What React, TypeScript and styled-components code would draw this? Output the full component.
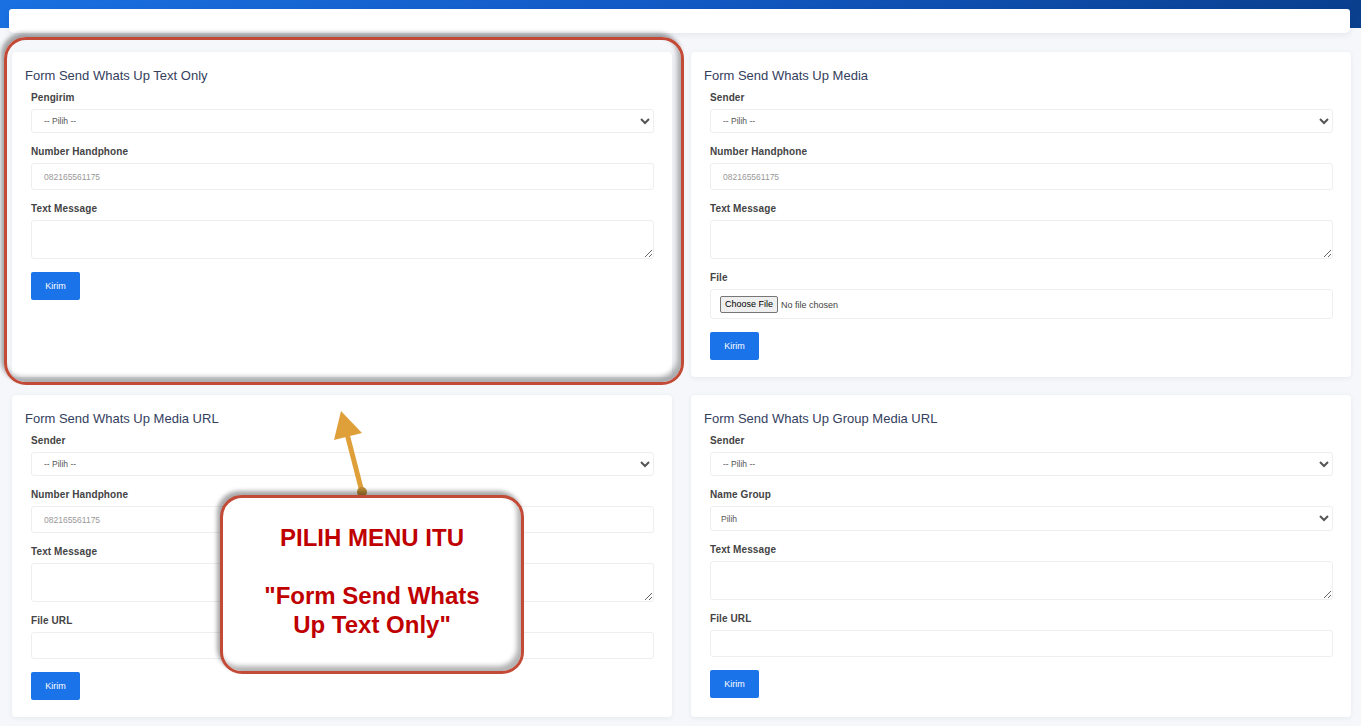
import React from "react";
import styled, { createGlobalStyle } from "styled-components";

const Global = createGlobalStyle`
  html, body { margin: 0; padding: 0; }
  body {
    background: #f5f7fa;
    font-family: "Liberation Sans", Arial, sans-serif;
  }
  * { box-sizing: border-box; }
`;

const Page = styled.div`
  position: relative;
  min-height: 726px;
  background:
    linear-gradient(90deg, #1a70e0 0%, #1259c4 50%, #0a3f8e 100%) top left / 100% 28px no-repeat,
    #f5f7fa;
  padding: 9px 11px 9px 9px;
`;

const TopCard = styled.div`
  height: 24px;
  background: #fff;
  border-radius: 3px 3px 5px 5px;
  box-shadow: 0 2px 6px rgba(30, 40, 80, 0.08);
`;

const Grid = styled.div`
  display: grid;
  grid-template-columns: 1fr 1fr;
  column-gap: 19px;
  row-gap: 18px;
  margin: 19px -1px 0 3px;
`;

const Card = styled.section`
  background: #fff;
  border-radius: 4px;
  box-shadow: 0 1px 5px rgba(30, 40, 80, 0.07);
  padding: 16px 18px 17px 13px;
`;

const Title = styled.h3`
  margin: 0 0 8px;
  font-size: 13px;
  line-height: 16px;
  font-weight: 400;
  color: #34405e;
`;

const Form = styled.div`
  padding-left: 6px;
  display: flex;
  flex-direction: column;
  align-items: flex-start;
`;

const Group = styled.div`
  width: 100%;
  margin-bottom: 13px;
`;

const Label = styled.div`
  font-size: 10px;
  line-height: 12px;
  font-weight: 700;
  color: #444;
  margin-bottom: 5px;
  letter-spacing: 0.1px;
`;

const Select = styled.select<{ $h?: number }>`
  display: block;
  width: 100%;
  height: ${(p) => p.$h ?? 24}px;
  border: 1px solid #eceef1;
  border-radius: 3px;
  background: #fff;
  padding: 0 8px 0 ${(p) => (p.$h ? 6 : 8)}px;
  font-family: "Liberation Sans", Arial, sans-serif;
  font-size: 8.5px;
  color: #555;
  outline: none;
`;

const Input = styled.input`
  display: block;
  width: 100%;
  height: 27px;
  border: 1px solid #eceef1;
  border-radius: 3px;
  background: #fff;
  padding: 0 12px;
  font-family: "Liberation Sans", Arial, sans-serif;
  font-size: 8.5px;
  color: #555;
  outline: none;
  &::placeholder { color: #999; }
`;

const TextArea = styled.textarea`
  display: block;
  width: 100%;
  height: 39px;
  border: 1px solid #eceef1;
  border-radius: 3px;
  background: #fff;
  font-family: "Liberation Sans", Arial, sans-serif;
  font-size: 9px;
  outline: none;
  resize: vertical;
`;

const FileBox = styled.div`
  width: 100%;
  height: 30px;
  border: 1px solid #eceef1;
  border-radius: 3px;
  display: flex;
  align-items: center;
  padding-left: 9px;
`;

const FileInput = styled.input`
  font-family: "Liberation Sans", Arial, sans-serif;
  font-size: 9px;
  color: #444;
  &::file-selector-button {
    font-family: "Liberation Sans", Arial, sans-serif;
    font-size: 9px;
    height: 17px;
    padding: 0 4px;
    margin-right: 3px;
    border: 1px solid #767676;
    border-radius: 2px;
    background: #efefef;
    color: #000;
  }
`;

const Button = styled.button`
  width: 49px;
  height: 28px;
  border: none;
  border-radius: 2px;
  background: #1a73e8;
  color: #fff;
  font-family: "Liberation Sans", Arial, sans-serif;
  font-size: 9px;
  cursor: pointer;
`;

const Frame = styled.div<{ $x: number; $y: number; $w: number; $h: number; $fill?: boolean }>`
  position: absolute;
  left: ${(p) => p.$x}px;
  top: ${(p) => p.$y}px;
  width: ${(p) => p.$w}px;
  height: ${(p) => p.$h}px;
  border: 3px solid #c34a36;
  border-radius: 22px;
  background: ${(p) => (p.$fill ? "#fff" : "transparent")};
  box-shadow: -3px -4px 4px rgba(0, 0, 0, 0.35), inset -4px -5px 5px rgba(0, 0, 0, 0.3);
  pointer-events: none;
`;

const Callout = styled(Frame)`
  display: flex;
  flex-direction: column;
  align-items: center;
  padding-top: 25px;
  font-family: "Liberation Sans", Arial, sans-serif;
  font-weight: 700;
  font-size: 24px;
  line-height: 29px;
  color: #c00000;
  text-align: center;
`;

const Arrow = styled.svg`
  position: absolute;
  left: 320px;
  top: 400px;
  overflow: visible;
  pointer-events: none;
`;

type Field =
  | { kind: "select"; label: string; value: string; h?: number }
  | { kind: "input"; label: string; placeholder?: string }
  | { kind: "textarea"; label: string }
  | { kind: "file"; label: string };

const FormCard: React.FC<{ title: string; fields: Field[] }> = ({ title, fields }) => (
  <Card>
    <Title>{title}</Title>
    <Form>
      {fields.map((f, i) => (
        <Group key={i}>
          <Label>{f.label}</Label>
          {f.kind === "select" && (
            <Select $h={f.h} defaultValue="">
              <option value="">{f.value}</option>
            </Select>
          )}
          {f.kind === "input" && <Input placeholder={f.placeholder} />}
          {f.kind === "textarea" && <TextArea />}
          {f.kind === "file" && (
            <FileBox>
              <FileInput type="file" />
            </FileBox>
          )}
        </Group>
      ))}
      <Button>Kirim</Button>
    </Form>
  </Card>
);

const PHONE = "082165561175";

export default function App() {
  return (
    <>
      <Global />
      <Page>
        <TopCard />
        <Grid>
          <FormCard
            title="Form Send Whats Up Text Only"
            fields={[
              { kind: "select", label: "Pengirim", value: "-- Pilih --" },
              { kind: "input", label: "Number Handphone", placeholder: PHONE },
              { kind: "textarea", label: "Text Message" },
            ]}
          />
          <FormCard
            title="Form Send Whats Up Media"
            fields={[
              { kind: "select", label: "Sender", value: "-- Pilih --" },
              { kind: "input", label: "Number Handphone", placeholder: PHONE },
              { kind: "textarea", label: "Text Message" },
              { kind: "file", label: "File" },
            ]}
          />
          <FormCard
            title="Form Send Whats Up Media URL"
            fields={[
              { kind: "select", label: "Sender", value: "-- Pilih --" },
              { kind: "input", label: "Number Handphone", placeholder: PHONE },
              { kind: "textarea", label: "Text Message" },
              { kind: "input", label: "File URL" },
            ]}
          />
          <FormCard
            title="Form Send Whats Up Group Media URL"
            fields={[
              { kind: "select", label: "Sender", value: "-- Pilih --" },
              { kind: "select", label: "Name Group", value: "Pilih", h: 25 },
              { kind: "textarea", label: "Text Message" },
              { kind: "input", label: "File URL" },
            ]}
          />
        </Grid>

        <Frame $x={4} $y={37} $w={680} $h={348} />
        <Arrow width="60" height="100" viewBox="0 0 60 100">
          <line x1="42" y1="92" x2="24" y2="22" stroke="#dfa03a" strokeWidth="5" />
          <polygon points="21,11 14,40 42,33" fill="#dfa03a" />
          <circle cx="42" cy="92" r="5" fill="#c18d34" />
        </Arrow>
        <Callout $x={220} $y={495} $w={304} $h={179} $fill>
          <span>PILIH MENU ITU</span>
          <span>&nbsp;</span>
          <span>"Form Send Whats</span>
          <span>Up Text Only"</span>
        </Callout>
      </Page>
    </>
  );
}
